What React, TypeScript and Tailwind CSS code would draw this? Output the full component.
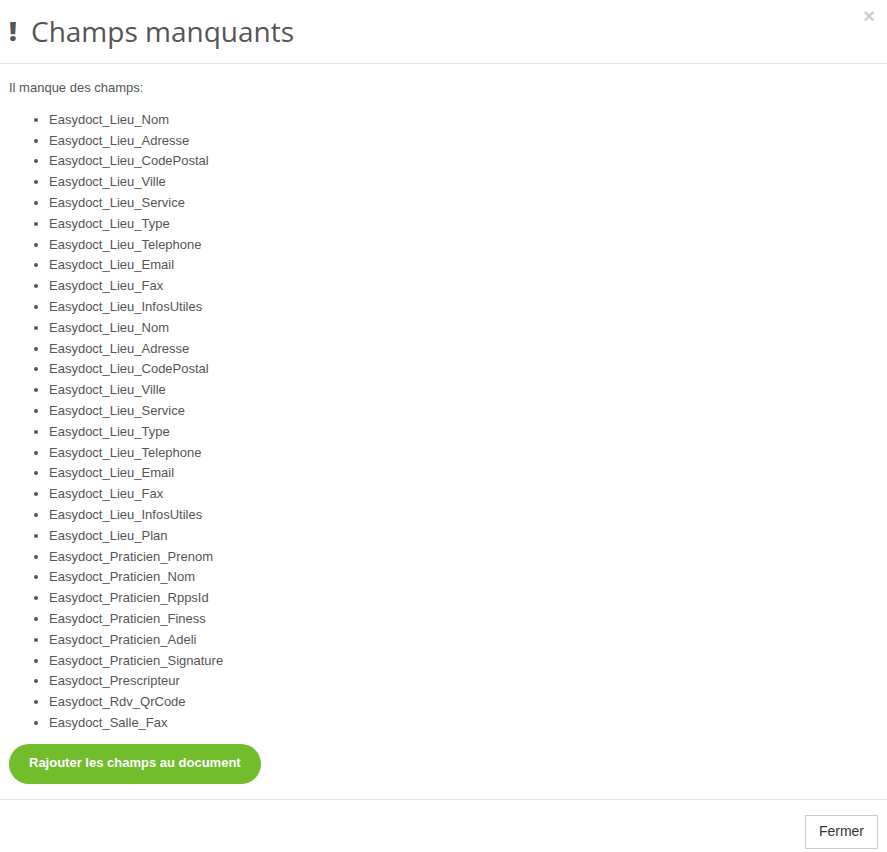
const champs = [
  'Easydoct_Lieu_Nom',
  'Easydoct_Lieu_Adresse',
  'Easydoct_Lieu_CodePostal',
  'Easydoct_Lieu_Ville',
  'Easydoct_Lieu_Service',
  'Easydoct_Lieu_Type',
  'Easydoct_Lieu_Telephone',
  'Easydoct_Lieu_Email',
  'Easydoct_Lieu_Fax',
  'Easydoct_Lieu_InfosUtiles',
  'Easydoct_Lieu_Nom',
  'Easydoct_Lieu_Adresse',
  'Easydoct_Lieu_CodePostal',
  'Easydoct_Lieu_Ville',
  'Easydoct_Lieu_Service',
  'Easydoct_Lieu_Type',
  'Easydoct_Lieu_Telephone',
  'Easydoct_Lieu_Email',
  'Easydoct_Lieu_Fax',
  'Easydoct_Lieu_InfosUtiles',
  'Easydoct_Lieu_Plan',
  'Easydoct_Praticien_Prenom',
  'Easydoct_Praticien_Nom',
  'Easydoct_Praticien_RppsId',
  'Easydoct_Praticien_Finess',
  'Easydoct_Praticien_Adeli',
  'Easydoct_Praticien_Signature',
  'Easydoct_Prescripteur',
  'Easydoct_Rdv_QrCode',
  'Easydoct_Salle_Fax',
];

export default function App() {
  return (
    <div className="min-h-[852px] bg-white text-[#555] font-['Liberation_Sans',Arial,sans-serif]">
      <div className="relative border-b border-[#e5e5e5] px-[9px] pt-[13px] pb-[14px]">
        <h4 className="flex items-center gap-[13px] font-['Open_Sans',sans-serif] text-[28px] leading-[36px] text-[#555]">
          <span className="w-[9px] font-black text-[27px]">!</span>
          <span>Champs manquants</span>
        </h4>
        <button className="absolute right-[12px] top-[6px] text-[20px] font-bold leading-none text-[#ccc]">
          ×
        </button>
      </div>

      <div className="px-[9px] pt-[14px] pb-[15px] text-[13px] leading-[20.8px]">
        <p className="mb-[11px]">Il manque des champs:</p>
        <ul className="list-disc pl-[40px] marker:text-[#555]">
          {champs.map((c, i) => (
            <li key={i}>{c}</li>
          ))}
        </ul>
        <button className="mt-[10px] h-[40px] rounded-full bg-[#71bd2c] px-[20px] text-[13px] font-bold text-white">
          Rajouter les champs au document
        </button>
      </div>

      <div className="flex justify-end border-t border-[#e5e5e5] px-[9px] pt-[15px] pb-[3px]">
        <button className="h-[34px] border border-[#ccc] bg-white px-[13px] text-[14px] text-[#333]">
          Fermer
        </button>
      </div>
    </div>
  );
}
